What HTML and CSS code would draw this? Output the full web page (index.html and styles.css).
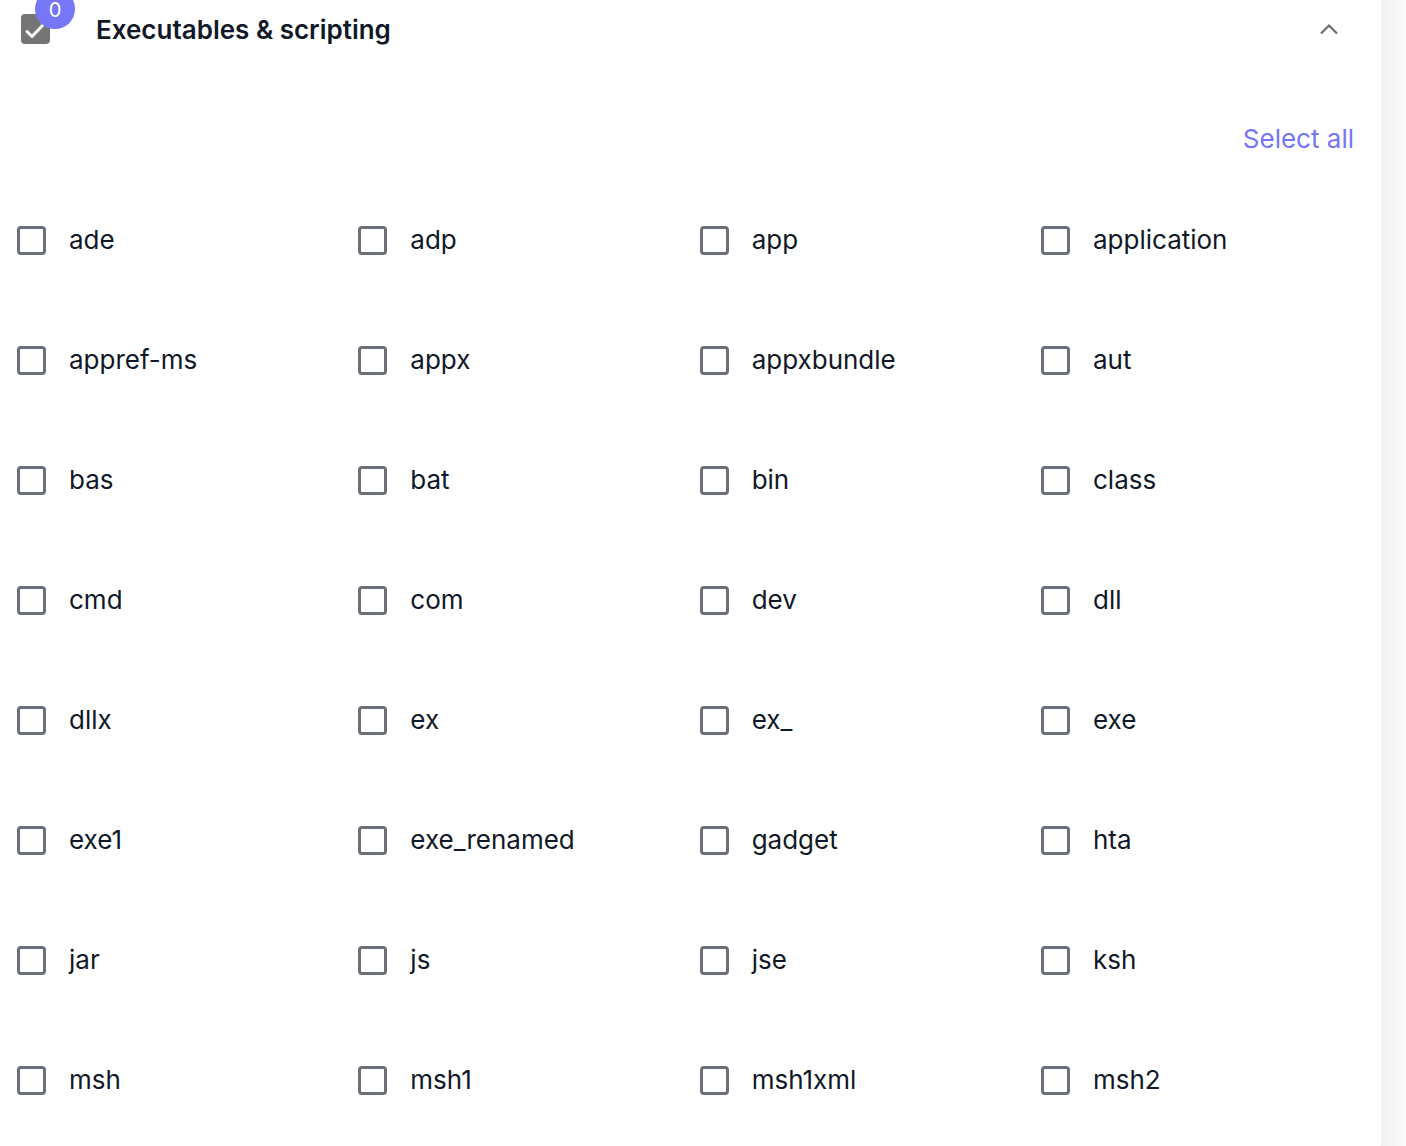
FILE: index.html
```html
<!DOCTYPE html>
<html lang="en">
<head>
    <meta charset="UTF-8">
    <meta name="viewport" content="width=device-width, initial-scale=1.0">
    <title>Executables &amp; scripting</title>
    <link rel="stylesheet" href="styles.css">
</head>
<body>

<div class="layout">
    <main class="panel">

        <!-- Group header -->
        <header class="group-head">
            <div class="group-check">
                <span class="box checked">
                    <svg viewBox="0 0 24 24" width="24" height="24"><path d="M3 14.5l5 5L19 8" fill="none" stroke="#fff" stroke-width="3" stroke-linecap="round" stroke-linejoin="round"/></svg>
                </span>
                <span class="badge">0</span>
            </div>
            <h2 class="group-title">Executables &amp; scripting</h2>
            <button class="collapse-btn" aria-label="Collapse">
                <svg viewBox="0 0 20 14" width="20" height="14"><path d="M2 11.5L10 3.5l8 8" fill="none" stroke="#6b6b6b" stroke-width="2.2"/></svg>
            </button>
        </header>

        <div class="toolbar">
            <a class="select-all" href="#">Select all</a>
        </div>

        <!-- Extension list -->
        <div class="ext-grid" id="ext-grid"></div>
    </main>
    <div class="gutter"></div>
</div>

<script>
    const extensions = [
        'ade', 'adp', 'app', 'application',
        'appref-ms', 'appx', 'appxbundle', 'aut',
        'bas', 'bat', 'bin', 'class',
        'cmd', 'com', 'dev', 'dll',
        'dllx', 'ex', 'ex_', 'exe',
        'exe1', 'exe_renamed', 'gadget', 'hta',
        'jar', 'js', 'jse', 'ksh',
        'msh', 'msh1', 'msh1xml', 'msh2'
    ];

    const grid = document.getElementById('ext-grid');
    extensions.forEach(ext => {
        const label = document.createElement('label');
        label.className = 'ext-item';
        label.innerHTML = `<input type="checkbox" class="ext-check"><span class="ext-name">${ext}</span>`;
        grid.appendChild(label);
    });
</script>

</body>
</html>
```

FILE: styles.css
```css
body {
    margin: 0;
    font-family: Inter, "Noto Sans", sans-serif;
    color: #111827;
    background: #ffffff;
}
.layout {
    display: flex;
    min-height: 100vh;
}
.panel {
    width: 1381px;
    box-sizing: border-box;
    padding: 0 0 0 17px;
}
.gutter {
    flex: 1;
    background: linear-gradient(to right, #f1f1f1, #fafafa);
}
.group-head {
    display: flex;
    align-items: center;
    height: 58px;
    padding-left: 4px;
    padding-right: 42px;
}
.group-check {
    position: relative;
    width: 29px;
    height: 30px;
}
.box.checked {
    display: flex;
    align-items: center;
    justify-content: center;
    width: 29px;
    height: 30px;
    border-radius: 4px;
    background: #757575;
}
.badge {
    position: absolute;
    left: 14px;
    top: -25px;
    width: 40px;
    height: 40px;
    border-radius: 50%;
    background: #7577f6;
    color: #ffffff;
    font-size: 20px;
    text-align: center;
    padding-top: 8px;
    box-sizing: border-box;
    line-height: 26px;
}
.group-title {
    margin: 0 0 0 46px;
    font-size: 26px;
    font-weight: 600;
    flex: 1;
}
.collapse-btn {
    border: none;
    background: none;
    padding: 0;
    display: flex;
    cursor: pointer;
}
.toolbar {
    display: flex;
    justify-content: flex-end;
    align-items: flex-end;
    height: 122px;
    box-sizing: border-box;
    padding: 0 27px 23px 0;
}
.select-all {
    color: #7476f5;
    font-size: 26px;
    line-height: 36px;
    text-decoration: none;
}
.ext-grid {
    display: grid;
    grid-template-columns: repeat(4, 341.33px);
    grid-auto-rows: 120px;
}
.ext-item {
    display: flex;
    align-items: center;
    gap: 23px;
    font-size: 26px;
    cursor: pointer;
}
.ext-name {
    padding-bottom: 2px;
}
.ext-check {
    appearance: none;
    -webkit-appearance: none;
    margin: 0;
    width: 29px;
    height: 29px;
    box-sizing: border-box;
    border: 3px solid #6b7079;
    border-radius: 4px;
    background: #ffffff;
}
```
